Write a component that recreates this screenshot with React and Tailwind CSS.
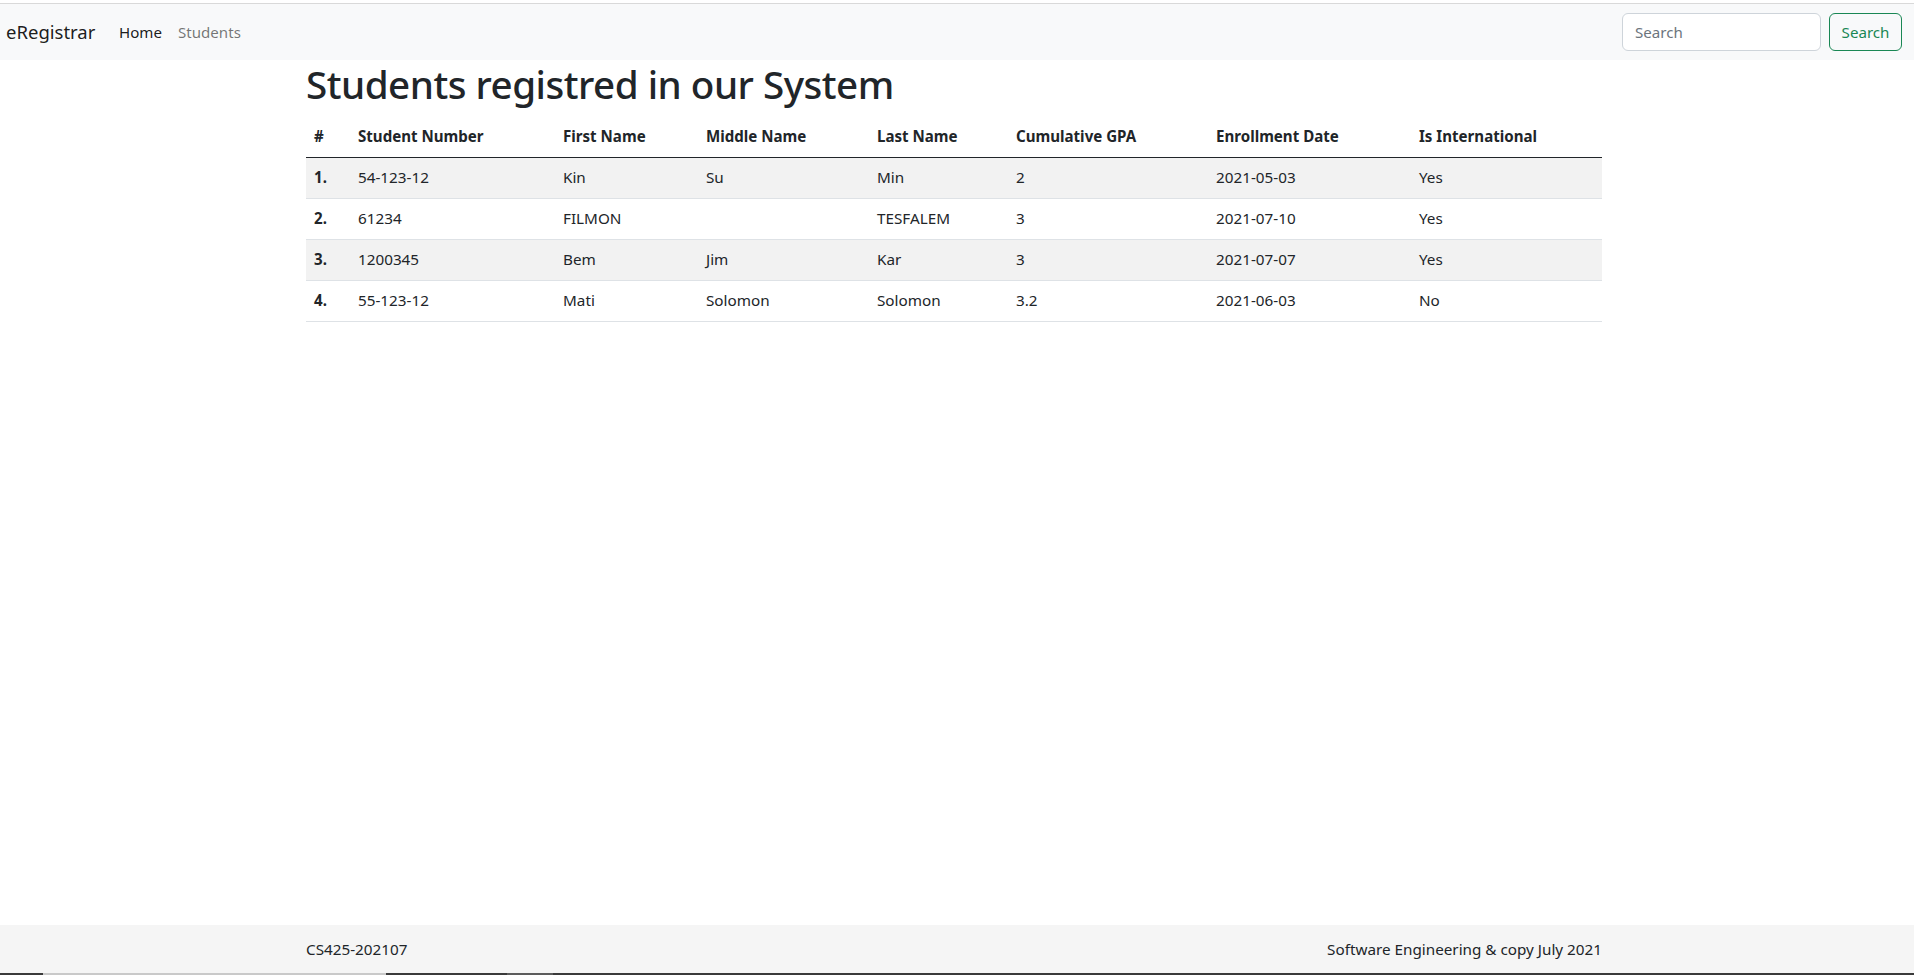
import React from 'react';

const students = [
  { num: '54-123-12', first: 'Kin', middle: 'Su', last: 'Min', gpa: '2', date: '2021-05-03', intl: 'Yes' },
  { num: '61234', first: 'FILMON', middle: '', last: 'TESFALEM', gpa: '3', date: '2021-07-10', intl: 'Yes' },
  { num: '1200345', first: 'Bem', middle: 'Jim', last: 'Kar', gpa: '3', date: '2021-07-07', intl: 'Yes' },
  { num: '55-123-12', first: 'Mati', middle: 'Solomon', last: 'Solomon', gpa: '3.2', date: '2021-06-03', intl: 'No' },
];

const columns = [
  { label: '#', width: 'w-[44px]' },
  { label: 'Student Number', width: 'w-[205px]' },
  { label: 'First Name', width: 'w-[143px]' },
  { label: 'Middle Name', width: 'w-[171px]' },
  { label: 'Last Name', width: 'w-[139px]' },
  { label: 'Cumulative GPA', width: 'w-[200px]' },
  { label: 'Enrollment Date', width: 'w-[203px]' },
  { label: 'Is International', width: 'w-[191px]' },
];

const Navbar = () => (
  <>
    <div className="h-[4px] bg-white border-b border-[#d9d9d9]" />
    <nav className="h-[56px] bg-[#f8f9fa] flex items-center justify-between pl-[6px] pr-[12px]">
      <div className="flex items-center">
        <span className="w-[113px] text-[18.5px] text-[#000000e6] leading-[30px]">eRegistrar</span>
        <span className="w-[59px] text-[15.1px] text-[#000000e6]">Home</span>
        <span className="text-[15.1px] text-[#0000008c]">Students</span>
      </div>
      <form className="flex items-center gap-2" onSubmit={(e) => e.preventDefault()}>
        <input
          type="search"
          placeholder="Search"
          className="w-[199px] h-[38px] px-3 bg-white border border-[#ced4da] rounded-md text-[15.1px] text-[#212529] placeholder:text-[#6c757d] outline-none"
        />
        <button className="w-[73px] h-[38px] border border-[#198754] rounded-md text-[15.1px] text-[#198754]">
          Search
        </button>
      </form>
    </nav>
  </>
);

const StudentsTable = () => (
  <table className="w-full table-fixed border-collapse text-[15.25px] text-[#212529]">
    <thead>
      <tr className="border-b border-[#212529]">
        {columns.map((col) => (
          <th key={col.label} className={`${col.width} h-[41px] px-2 text-left font-bold text-[15.1px]`}>
            {col.label}
          </th>
        ))}
      </tr>
    </thead>
    <tbody>
      {students.map((s, i) => (
        <tr key={s.num} className={`border-b border-[#dee2e6] ${i % 2 === 0 ? 'bg-[#f2f2f2]' : 'bg-white'}`}>
          <th className="h-[41px] px-2 text-left font-bold text-[15.1px]">{i + 1}.</th>
          <td className="px-2">{s.num}</td>
          <td className="px-2">{s.first}</td>
          <td className="px-2">{s.middle}</td>
          <td className="px-2">{s.last}</td>
          <td className="px-2">{s.gpa}</td>
          <td className="px-2">{s.date}</td>
          <td className="px-2">{s.intl}</td>
        </tr>
      ))}
    </tbody>
  </table>
);

const App = () => {
  return (
    <div className="h-[975px] flex flex-col bg-white text-[#212529]" style={{ fontFamily: '"Noto Sans", "Open Sans", Arial, sans-serif' }}>
      <Navbar />

      {/* Contenu */}
      <main className="flex-1 flex justify-center pr-[6px]">
        <div className="w-[1296px]">
          <h1 className="text-[38.6px] font-medium leading-[48px] mb-2 tracking-[-0.5px]">Students registred in our System</h1>
          <StudentsTable />
        </div>
      </main>

      {/* Footer */}
      <footer className="h-[48px] bg-[#f5f5f5] flex justify-center pr-[6px]">
        <div className="w-[1296px] flex items-center justify-between text-[15.25px]">
          <span>CS425-202107</span>
          <span>Software Engineering &amp; copy July 2021</span>
        </div>
      </footer>
      <div className="h-[2px] flex">
        <div className="w-[43px] bg-[#3a3a3a]" />
        <div className="w-[343px] bg-[#c9c9c9]" />
        <div className="w-[121px] bg-[#3a3a3a]" />
        <div className="w-[46px] bg-[#5c5c5c]" />
        <div className="flex-1 bg-[#3a3a3a]" />
      </div>
    </div>
  );
};

export default App;
